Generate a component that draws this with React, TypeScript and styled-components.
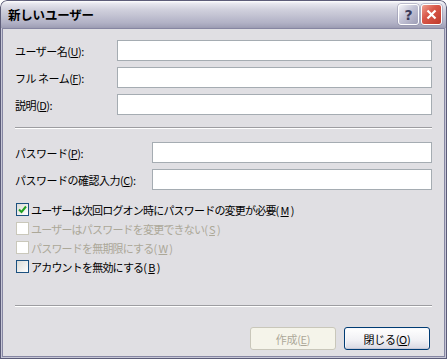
import React from 'react';
import styled, { createGlobalStyle } from 'styled-components';

const Global = createGlobalStyle`
  html, body { margin: 0; padding: 0; background: #ffffff; }
  body { font-family: "Noto Sans CJK JP", "Noto Sans", sans-serif; }
  * { box-sizing: border-box; }
`;

const Window = styled.div`
  width: 447px;
  height: 359px;
  display: flex;
  flex-direction: column;
  border-radius: 7px 7px 0 0;
  overflow: hidden;
`;

const TitleBar = styled.div`
  height: 28px;
  flex: none;
  display: flex;
  align-items: center;
  padding: 0 4px 0 7px;
  border: 1px solid #5d5d79;
  border-bottom: none;
  border-radius: 7px 7px 0 0;
  background: linear-gradient(
    #ffffff 0%,
    #e6e6ee 10%,
    #d2d2de 30%,
    #c2c2d2 55%,
    #b2b2c6 80%,
    #a6a6bc 92%,
    #9c9cb2 100%
  );
`;

const Title = styled.div`
  flex: 1;
  font-size: 12.5px;
  font-weight: 700;
  color: #000;
  letter-spacing: -0.2px;
`;

const CaptionButton = styled.div<{ $kind: 'help' | 'close' }>`
  width: 21px;
  height: 21px;
  margin-left: 2px;
  border: 1px solid #ffffff;
  border-radius: 3px;
  display: flex;
  align-items: center;
  justify-content: center;
  box-shadow: 0 0 0 0.5px #8e8ea8;
  background: ${(p) =>
    p.$kind === 'close'
      ? 'linear-gradient(135deg, #f0a090 0%, #d9584a 40%, #c0392b 100%)'
      : 'linear-gradient(135deg, #f4f4f8 0%, #c4c4d6 45%, #9d9db6 100%)'};
  color: ${(p) => (p.$kind === 'close' ? '#ffffff' : '#3a3a5a')};
  font-family: "DejaVu Sans", sans-serif;
  font-weight: 700;
  font-size: 14px;
  line-height: 1;
`;

const Frame = styled.div`
  flex: 1;
  display: flex;
  border: 1px solid #5b5b78;
  border-top: none;
  background: #c6c6d6;
  padding: 0 1px 1px;
`;

const Body = styled.div`
  flex: 1;
  display: flex;
  flex-direction: column;
  background: #e0dfe3;
  border: 1px solid #8686a2;
  padding: 11px 12px 0 12px;
  font-size: 11px;
  color: #000;
`;

const Group = styled.div`
  display: flex;
  flex-direction: column;
  gap: 6px;
`;

const FieldRow = styled.div<{ $label: number }>`
  display: grid;
  grid-template-columns: ${(p) => p.$label}px 1fr;
  align-items: center;
  height: 21px;
`;

const Label = styled.label`
  font-size: 11px;
  white-space: nowrap;
  letter-spacing: -0.5px;
`;

const TextBox = styled.div`
  height: 21px;
  border: 1px solid #a5acb2;
  background: #ffffff;
`;

const Separator = styled.div<{ $top: number; $bottom: number }>`
  height: 2px;
  margin: ${(p) => p.$top}px 0 ${(p) => p.$bottom}px;
  border-top: 1px solid #9d9da1;
  border-bottom: 1px solid #ffffff;
`;

const CheckList = styled.div`
  display: flex;
  flex-direction: column;
  margin-top: 10px;
  padding-left: 1px;
`;

const CheckRow = styled.div<{ $disabled?: boolean }>`
  height: 19px;
  display: flex;
  align-items: center;
  gap: 2px;
  color: ${(p) => (p.$disabled ? '#aca899' : '#000')};
  letter-spacing: -0.8px;
  white-space: nowrap;
`;

const Box = styled.div<{ $disabled?: boolean }>`
  width: 13px;
  height: 13px;
  flex: none;
  border: 1px solid ${(p) => (p.$disabled ? '#cac8bb' : '#1c5180')};
  background: ${(p) =>
    p.$disabled ? '#ffffff' : 'linear-gradient(135deg, #dcdcd7 0%, #ffffff 100%)'};
  display: flex;
  align-items: center;
  justify-content: center;
`;

const Buttons = styled.div`
  display: flex;
  justify-content: flex-end;
  gap: 8px;
  padding-right: 2px;
  margin-top: 20px;
`;

const Button = styled.div<{ $disabled?: boolean }>`
  width: 86px;
  height: 23px;
  display: flex;
  align-items: center;
  justify-content: center;
  border-radius: 3px;
  font-size: 11px;
  letter-spacing: -0.3px;
  border: 1px solid ${(p) => (p.$disabled ? '#c9c7ba' : '#003c74')};
  background: ${(p) =>
    p.$disabled ? '#f5f4ea' : 'linear-gradient(#ffffff 0%, #f0f0f4 60%, #d8d8e2 100%)'};
  color: ${(p) => (p.$disabled ? '#aca899' : '#000')};
  box-shadow: ${(p) =>
    p.$disabled ? 'none' : 'inset 0 -1px 0 #c8c8d6, inset 0 0 0 1px #f8f8fc'};
`;

const Check = () => (
  <svg width="9" height="9" viewBox="0 0 9 9">
    <path d="M1 4.5 L3.5 7 L8 1.5" fill="none" stroke="#21a121" strokeWidth="2" />
  </svg>
);

const Key = ({ k }: { k: string }) => (
  <>
    (<u>{k}</u>)
  </>
);

export default function App() {
  return (
    <>
      <Global />
      <Window>
        <TitleBar>
          <Title>新しいユーザー</Title>
          <CaptionButton $kind="help">?</CaptionButton>
          <CaptionButton $kind="close">
            <svg width="11" height="11" viewBox="0 0 11 11">
              <path d="M1.5 1.5 L9.5 9.5 M9.5 1.5 L1.5 9.5" stroke="#fff" strokeWidth="2.2" />
            </svg>
          </CaptionButton>
        </TitleBar>
        <Frame>
          <Body>
            <Group>
              <FieldRow $label={102}>
                <Label>ユーザー名<Key k="U" />:</Label>
                <TextBox />
              </FieldRow>
              <FieldRow $label={102}>
                <Label>フル ネーム<Key k="F" />:</Label>
                <TextBox />
              </FieldRow>
              <FieldRow $label={102}>
                <Label>説明<Key k="D" />:</Label>
                <TextBox />
              </FieldRow>
            </Group>
            <Separator $top={12} $bottom={13} />
            <Group>
              <FieldRow $label={137}>
                <Label>パスワード<Key k="P" />:</Label>
                <TextBox />
              </FieldRow>
              <FieldRow $label={137}>
                <Label>パスワードの確認入力<Key k="C" />:</Label>
                <TextBox />
              </FieldRow>
            </Group>
            <CheckList>
              <CheckRow>
                <Box><Check /></Box>
                ユーザーは次回ログオン時にパスワードの変更が必要<Key k="M" />
              </CheckRow>
              <CheckRow $disabled>
                <Box $disabled />
                ユーザーはパスワードを変更できない<Key k="S" />
              </CheckRow>
              <CheckRow $disabled>
                <Box $disabled />
                パスワードを無期限にする<Key k="W" />
              </CheckRow>
              <CheckRow>
                <Box />
                アカウントを無効にする<Key k="B" />
              </CheckRow>
            </CheckList>
            <Separator $top={29} $bottom={0} />
            <Buttons>
              <Button $disabled>作成<Key k="E" /></Button>
              <Button>閉じる<Key k="O" /></Button>
            </Buttons>
          </Body>
        </Frame>
      </Window>
    </>
  );
}
